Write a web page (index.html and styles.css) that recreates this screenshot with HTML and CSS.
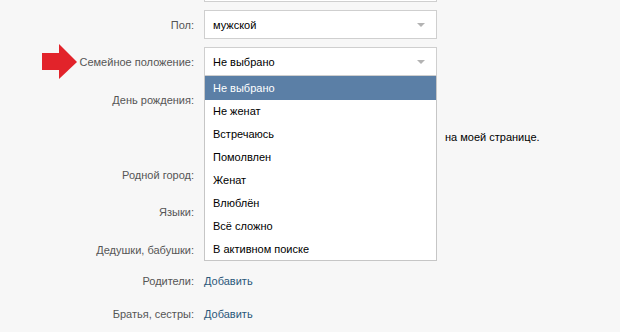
FILE: index.html
```html
<!DOCTYPE html>
<html lang="ru">
<head>
<meta charset="utf-8">
<title>Редактирование профиля</title>
<link rel="stylesheet" href="styles.css">
</head>
<body>
<div class="form">
  <div class="row first">
    <div class="label"></div>
    <div class="field"></div>
  </div>
  <div class="row">
    <div class="label">Пол:</div>
    <div class="field select">мужской<span class="caret"></span></div>
  </div>
  <div class="row">
    <div class="label">Семейное положение:</div>
    <div class="field select open">Не выбрано<span class="caret"></span>
      <ul class="dropdown">
        <li class="active">Не выбрано</li>
        <li>Не женат</li>
        <li>Встречаюсь</li>
        <li>Помолвлен</li>
        <li>Женат</li>
        <li>Влюблён</li>
        <li>Всё сложно</li>
        <li>В активном поиске</li>
      </ul>
    </div>
    <svg class="pointer" width="37" height="37" viewBox="0 0 37 37"><rect x="1" y="10" width="19" height="17" fill="#e2232a"/><polygon points="18,1 36,19 18,36" fill="#e2232a"/></svg>
  </div>
  <div class="row gap9">
    <div class="label">День рождения:</div>
    <div class="slot"></div>
  </div>
  <div class="row">
    <div class="label"></div>
    <div class="slot"></div>
    <div class="after">на моей странице.</div>
  </div>
  <div class="row gap9">
    <div class="label">Родной город:</div>
    <div class="slot"></div>
  </div>
  <div class="row">
    <div class="label">Языки:</div>
    <div class="slot"></div>
  </div>
  <div class="row gap9">
    <div class="label">Дедушки, бабушки:</div>
    <div class="slot"></div>
  </div>
  <div class="row-link">
    <div class="label">Родители:</div>
    <a class="link" href="#">Добавить</a>
  </div>
  <div class="row-link">
    <div class="label">Братья, сестры:</div>
    <a class="link" href="#">Добавить</a>
  </div>
</div>
</body>
</html>
```
FILE: styles.css
```css
html, body {
  margin: 0;
  padding: 0;
  background: #f7f7f7;
  height: 332px;
  overflow: hidden;
}
body {
  font-family: "Liberation Sans", Arial, sans-serif;
  font-size: 11px;
  color: #000;
}
.form {
  display: flex;
  flex-direction: column;
}
.row {
  display: flex;
  align-items: center;
  height: 29px;
  margin-top: 8px;
  position: relative;
}
.row.first {
  margin-top: -27px;
}
.row.gap9 {
  margin-top: 9px;
}
.label {
  width: 194px;
  flex: none;
  text-align: right;
  color: #555;
  margin-right: 10px;
}
.field {
  width: 233px;
  height: 29px;
  box-sizing: border-box;
  flex: none;
  border: 1px solid #cfcfcf;
  background: #fff;
  padding-left: 8px;
  padding-right: 11px;
  display: flex;
  align-items: center;
  position: relative;
  color: #000;
}
.slot {
  width: 233px;
  height: 29px;
  flex: none;
}
.caret {
  margin-left: auto;
  width: 0;
  height: 0;
  border-left: 4px solid transparent;
  border-right: 4px solid transparent;
  border-top: 4px solid #b3b3b3;
}
.after {
  margin-left: 8px;
  color: #000;
}
.dropdown {
  position: absolute;
  top: calc(100% + 1px);
  left: -1px;
  width: 233px;
  box-sizing: border-box;
  margin: 0;
  padding: 0;
  list-style: none;
  background: #fff;
  border: 1px solid #c6c6c6;
  border-top: none;
  z-index: 5;
}
.dropdown li {
  height: 23px;
  line-height: 23px;
  padding-left: 8px;
  color: #000;
}
.dropdown li.active {
  height: 24px;
  line-height: 24px;
  background: #5b7fa6;
  color: #fff;
}
.dropdown li:last-child {
  height: 22px;
}
.pointer {
  position: absolute;
  left: 41px;
  top: -4px;
}
.row-link {
  display: flex;
  align-items: center;
  height: 33px;
}
.link {
  color: #2b587a;
  text-decoration: none;
}
```
